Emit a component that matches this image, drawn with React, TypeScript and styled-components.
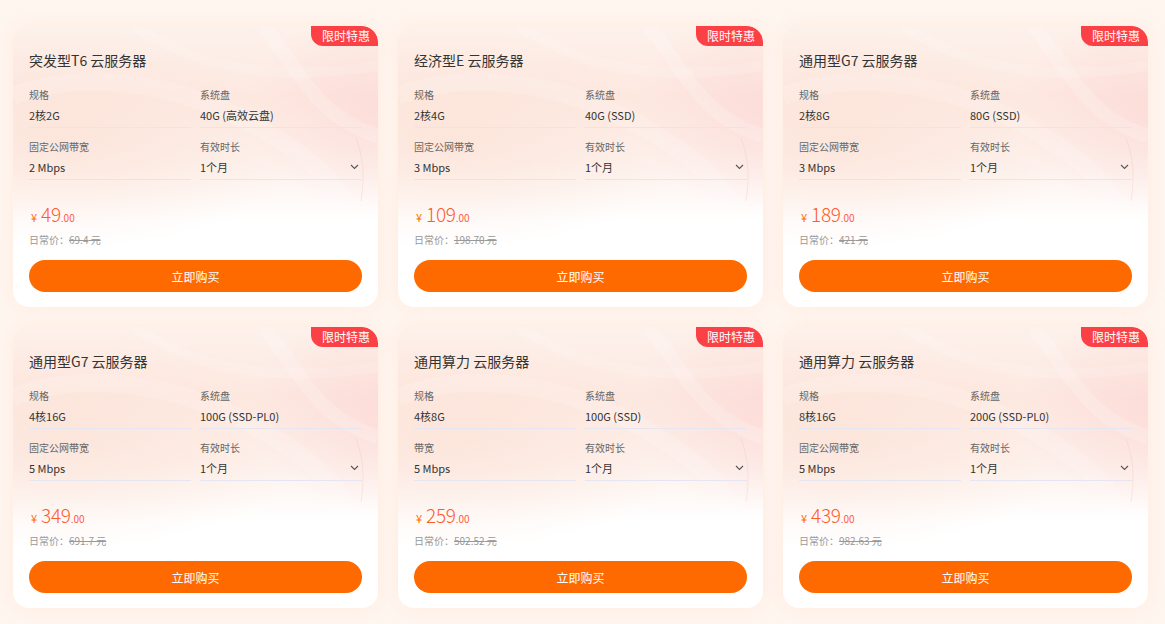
import { createGlobalStyle } from "styled-components";
import styled from "styled-components";

interface Product {
    title: string;
    spec: string;
    disk: string;
    bandwidthLabel: string;
    bandwidth: string;
    price: string;
    originalPrice: string;
}

const PRODUCTS: Product[] = [
    {
        title: "突发型T6 云服务器",
        spec: "2核2G",
        disk: "40G (高效云盘)",
        bandwidthLabel: "固定公网带宽",
        bandwidth: "2 Mbps",
        price: "49",
        originalPrice: "69.4",
    },
    {
        title: "经济型E 云服务器",
        spec: "2核4G",
        disk: "40G (SSD)",
        bandwidthLabel: "固定公网带宽",
        bandwidth: "3 Mbps",
        price: "109",
        originalPrice: "198.70",
    },
    {
        title: "通用型G7 云服务器",
        spec: "2核8G",
        disk: "80G (SSD)",
        bandwidthLabel: "固定公网带宽",
        bandwidth: "3 Mbps",
        price: "189",
        originalPrice: "421",
    },
    {
        title: "通用型G7 云服务器",
        spec: "4核16G",
        disk: "100G (SSD-PL0)",
        bandwidthLabel: "固定公网带宽",
        bandwidth: "5 Mbps",
        price: "349",
        originalPrice: "691.7",
    },
    {
        title: "通用算力 云服务器",
        spec: "4核8G",
        disk: "100G (SSD)",
        bandwidthLabel: "带宽",
        bandwidth: "5 Mbps",
        price: "259",
        originalPrice: "502.52",
    },
    {
        title: "通用算力 云服务器",
        spec: "8核16G",
        disk: "200G (SSD-PL0)",
        bandwidthLabel: "固定公网带宽",
        bandwidth: "5 Mbps",
        price: "439",
        originalPrice: "982.63",
    },
];

const GlobalStyle = createGlobalStyle`
    * {
        box-sizing: border-box;
    }

    body {
        margin: 0;
        background: #fff6f0;
        font-family: "Noto Sans CJK SC", "Noto Sans", sans-serif;
    }
`;

const Page = styled.div`
    width: 1165px;
    height: 624px;
    padding: 26px 17px 0 13px;
    background: #fff6f0;
`;

const Grid = styled.div`
    display: grid;
    grid-template-columns: repeat(3, 365px);
    column-gap: 20px;
    row-gap: 20px;
`;

const Card = styled.div`
    position: relative;
    height: 281px;
    padding: 24px 16px 15px;
    border-radius: 16px;
    overflow: hidden;
    background:
        radial-gradient(ellipse 130px 100px at 100% 30%, rgba(252, 212, 210, 0.6), rgba(252, 212, 210, 0) 100%),
        radial-gradient(ellipse 240px 110px at 15% 40%, rgba(252, 226, 214, 0.7), rgba(252, 226, 214, 0) 100%),
        linear-gradient(180deg, #fdf1eb 0px, #fde9e1 70px, #fdf2ed 140px, #ffffff 195px);
    box-shadow: 0 0 18px rgba(255, 214, 190, 0.35);
`;

const Swirls = styled.svg`
    position: absolute;
    top: 0;
    left: 0;
    pointer-events: none;
`;

const Badge = styled.div`
    position: absolute;
    top: 0;
    right: 0;
    width: 67px;
    height: 20px;
    border-radius: 0 16px 0 12px;
    background: #fc4146;
    color: #ffffff;
    font-size: 12px;
    line-height: 20px;
    text-align: center;
    padding-left: 3px;
`;

const Body = styled.div`
    position: relative;
    display: flex;
    flex-direction: column;
`;

const Title = styled.div`
    height: 20px;
    font-size: 14px;
    line-height: 20px;
    color: #333333;
`;

const Fields = styled.div`
    display: grid;
    grid-template-columns: 162px 162px;
    column-gap: 9px;
    row-gap: 11px;
    margin-top: 17px;
`;

const Field = styled.div`
    padding-bottom: 2px;
    border-bottom: 1px solid #e6e6f2;
`;

const Label = styled.div`
    height: 16px;
    font-size: 10px;
    line-height: 16px;
    color: #666666;
`;

const Value = styled.div`
    display: flex;
    align-items: center;
    justify-content: space-between;
    height: 20px;
    margin-top: 2px;
    padding-right: 3px;
    font-size: 11px;
    line-height: 20px;
    color: #333333;
`;

const Price = styled.div`
    display: flex;
    align-items: baseline;
    height: 24px;
    margin-top: 22px;
    padding-left: 2px;
    line-height: 24px;
`;

const Currency = styled.span`
    font-size: 11px;
    color: #ff6a00;
    margin-right: 4px;
`;

const Amount = styled.span`
    font-size: 19px;
    font-weight: 300;
    color: #ff5c2e;
    letter-spacing: -0.3px;
`;

const Cents = styled.span`
    font-size: 10px;
    color: #ff5a4a;
`;

const Original = styled.div`
    height: 16px;
    margin-top: 6px;
    font-size: 10px;
    line-height: 16px;
    color: #999999;

    s {
        text-decoration-color: #999999;
    }
`;

const BuyButton = styled.button`
    height: 32px;
    margin-top: 12px;
    border: none;
    border-radius: 16px;
    background: #ff6a00;
    color: #ffffff;
    font-family: inherit;
    font-size: 12px;
    cursor: pointer;
`;

const Chevron = () => (
    <svg width="9" height="6" viewBox="0 0 9 6" fill="none">
        <path d="M1 1l3.5 3.5L8 1" stroke="#555" strokeWidth="1.1" />
    </svg>
);

// faint white ribbons on the card header
const CardSwirls = () => (
    <Swirls width="365" height="281" viewBox="0 0 365 281" fill="none">
        <path d="M250 0 C 285 40, 300 90, 365 110" stroke="rgba(255,255,255,0.18)" strokeWidth="14" />
        <path d="M120 0 C 170 30, 230 60, 365 40" stroke="rgba(255,255,255,0.14)" strokeWidth="10" />
        <path d="M0 70 C 80 40, 180 60, 260 110 C 300 135, 330 160, 345 200" stroke="rgba(255,255,255,0.16)" strokeWidth="18" />
        <path d="M343 112 C 350 130, 352 150, 348 175" stroke="rgba(240,196,186,0.35)" strokeWidth="1" />
    </Swirls>
);

const ProductCard = ({ product }: { product: Product }) => (
    <Card>
        <CardSwirls />
        <Badge>限时特惠</Badge>
        <Body>
            <Title>{product.title}</Title>
            <Fields>
                <Field>
                    <Label>规格</Label>
                    <Value>{product.spec}</Value>
                </Field>
                <Field>
                    <Label>系统盘</Label>
                    <Value>{product.disk}</Value>
                </Field>
                <Field>
                    <Label>{product.bandwidthLabel}</Label>
                    <Value>{product.bandwidth}</Value>
                </Field>
                <Field>
                    <Label>有效时长</Label>
                    <Value>
                        1个月
                        <Chevron />
                    </Value>
                </Field>
            </Fields>
            <Price>
                <Currency>¥</Currency>
                <Amount>{product.price}</Amount>
                <Cents>.00</Cents>
            </Price>
            <Original>
                日常价：<s>{product.originalPrice} 元</s>
            </Original>
            <BuyButton>立即购买</BuyButton>
        </Body>
    </Card>
);

const App = () => (
    <Page>
        <GlobalStyle />
        <Grid>
            {PRODUCTS.map((product, index) => (
                <ProductCard key={index} product={product} />
            ))}
        </Grid>
    </Page>
);

export default App;
